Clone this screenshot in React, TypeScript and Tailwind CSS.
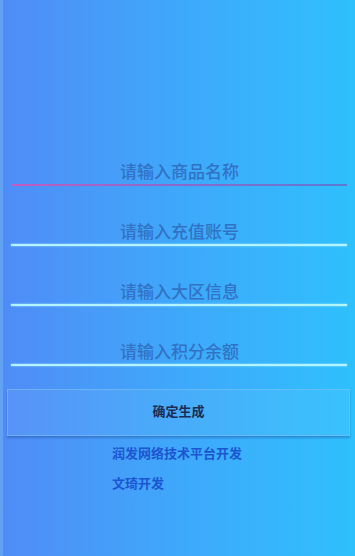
import React from "react";

const fields = ["请输入商品名称", "请输入充值账号", "请输入大区信息", "请输入积分余额"];

export default function App() {
  return (
    <div
      className="w-full h-[556px] overflow-hidden bg-gradient-to-r from-[#4f8cf7] via-[#3ea8fa] to-[#2ec0fd] border-l-[3px] border-[#62a2f3]"
      style={{ fontFamily: '"Noto Sans CJK SC", "Noto Sans", sans-serif' }}
    >
      <div className="pt-[126px] flex flex-col">
        {fields.map((f, i) => (
          <div key={f} className="h-[60px] flex flex-col justify-end">
            <div className="text-center text-[17px] leading-[24px] font-medium text-[#3172c4] pl-[1px]">{f}</div>
            <div
              className={
                i === 0
                  ? "mt-[1px] ml-[9px] mr-[8px] h-[2px] bg-gradient-to-r from-[#c05cc0] via-[#8a68cc] to-[#5a7ad2]"
                  : "mt-[1px] ml-[8px] mr-[8px] h-[2px] bg-[#b4f4ff] shadow-[0_0_2px_rgba(200,255,255,0.8)]"
              }
            />
          </div>
        ))}
      </div>
      <div className="mt-[23px] ml-[4px] mr-[5px] h-[47px] pb-[3px] flex items-center justify-center border border-[#7ec0fa]/60 bg-white/5 shadow-[0_2px_2px_rgba(20,60,150,0.35)]">
        <span className="text-[13px] font-bold text-[#1c2d55]">确定生成</span>
      </div>
      <div className="pl-[109px] mt-[7px] flex flex-col gap-[10px]">
        <div className="text-[13px] leading-[20px] font-bold text-[#1c55d2]">润发网络技术平台开发</div>
        <div className="text-[13px] leading-[20px] font-bold text-[#1c55d2]">文琦开发</div>
      </div>
    </div>
  );
}
